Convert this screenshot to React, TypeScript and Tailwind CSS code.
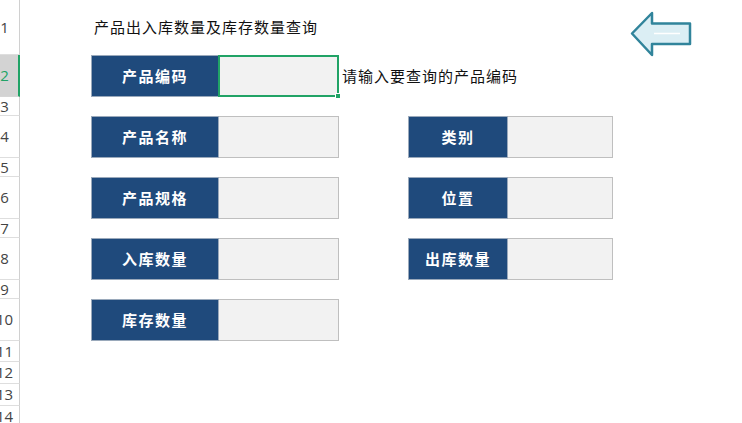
const cjk = "font-['Microsoft_YaHei','Noto_Sans_CJK_SC',sans-serif]";

function RowHead({ n, selected }: { n: number; selected?: boolean }) {
    return (
        <div
            className={
                selected
                    ? 'w-[20px] shrink-0 overflow-hidden flex items-center bg-[#d3d3d3] border-r-2 border-r-[#21a366] border-b border-b-[#d6d6d6]'
                    : 'w-[20px] shrink-0 overflow-hidden flex items-center bg-white border-r border-r-[#d0d0d0] border-b border-b-[#dedede]'
            }
        >
            <div
                className={
                    selected
                        ? "w-[31px] shrink-0 -ml-[11px] text-center text-[15px] text-[#21a366] font-['Open_Sans',sans-serif]"
                        : "w-[31px] shrink-0 -ml-[11px] text-center text-[15px] text-[#444] font-['Open_Sans',sans-serif]"
                }
            >
                {n}
            </div>
        </div>
    );
}

function Label({ text, w }: { text: string; w: string }) {
    return (
        <div className={`${w} flex items-center justify-center bg-[#1f4a7c] border border-[#9aa9bb] text-white text-[15px] font-bold tracking-[1.5px] ${cjk}`}>
            {text}
        </div>
    );
}

function Value({ w }: { w: string }) {
    return <div className={`${w} bg-[#f2f2f2] border border-[#bfbfbf] border-l-0`} />;
}

export default function App() {
    return (
        <div className="relative w-[742px] h-[423px] overflow-hidden bg-white">
            {/* row 1 - title */}
            <div className="flex h-[55px]">
                <RowHead n={1} />
                <div className={`ml-[74px] flex items-center text-[15px] tracking-[1px] text-[#111] ${cjk}`}>
                    产品出入库数量及库存数量查询
                </div>
            </div>

            {/* row 2 - input */}
            <div className="flex h-[42px]">
                <RowHead n={2} selected />
                <div className="ml-[71px] flex">
                    <Label text="产品编码" w="w-[128px]" />
                    <div className="relative w-[121px] -ml-px bg-[#f2f2f2] border-2 border-[#21a366]">
                        <div className="absolute -right-[4px] -bottom-[4px] w-[6px] h-[6px] bg-[#21a366] border border-white" />
                    </div>
                    <div className={`ml-[3px] flex items-center text-[15px] tracking-[1px] text-[#111] ${cjk}`}>
                        请输入要查询的产品编码
                    </div>
                </div>
            </div>

            <div className="flex h-[19px]">
                <RowHead n={3} />
            </div>

            <div className="flex h-[42px]">
                <RowHead n={4} />
                <div className="ml-[71px] flex">
                    <Label text="产品名称" w="w-[128px]" />
                    <Value w="w-[120px]" />
                    <div className="ml-[69px] flex">
                        <Label text="类别" w="w-[100px]" />
                        <Value w="w-[105px]" />
                    </div>
                </div>
            </div>

            <div className="flex h-[19px]">
                <RowHead n={5} />
            </div>

            <div className="flex h-[42px]">
                <RowHead n={6} />
                <div className="ml-[71px] flex">
                    <Label text="产品规格" w="w-[128px]" />
                    <Value w="w-[120px]" />
                    <div className="ml-[69px] flex">
                        <Label text="位置" w="w-[100px]" />
                        <Value w="w-[105px]" />
                    </div>
                </div>
            </div>

            <div className="flex h-[19px]">
                <RowHead n={7} />
            </div>

            <div className="flex h-[42px]">
                <RowHead n={8} />
                <div className="ml-[71px] flex">
                    <Label text="入库数量" w="w-[128px]" />
                    <Value w="w-[120px]" />
                    <div className="ml-[69px] flex">
                        <Label text="出库数量" w="w-[100px]" />
                        <Value w="w-[105px]" />
                    </div>
                </div>
            </div>

            <div className="flex h-[19px]">
                <RowHead n={9} />
            </div>

            <div className="flex h-[42px]">
                <RowHead n={10} />
                <div className="ml-[71px] flex">
                    <Label text="库存数量" w="w-[128px]" />
                    <Value w="w-[120px]" />
                </div>
            </div>

            <div className="flex h-[21px]">
                <RowHead n={11} />
            </div>
            <div className="flex h-[22px]">
                <RowHead n={12} />
            </div>
            <div className="flex h-[22px]">
                <RowHead n={13} />
            </div>
            <div className="flex h-[22px]">
                <RowHead n={14} />
            </div>

            {/* back arrow shape */}
            <svg className="absolute left-[630px] top-[11px]" width="62" height="46" viewBox="0 0 62 46">
                <path
                    d="M2 22.5 L22 2 L22 12.5 L60 12.5 L60 33 L22 33 L22 44 Z"
                    fill="#dbeef4"
                    stroke="#31849b"
                    strokeWidth="2.5"
                    strokeLinejoin="round"
                />
                <line x1="24" y1="22.5" x2="50" y2="22.5" stroke="#ffffff" strokeWidth="1.5" />
            </svg>
        </div>
    );
}
